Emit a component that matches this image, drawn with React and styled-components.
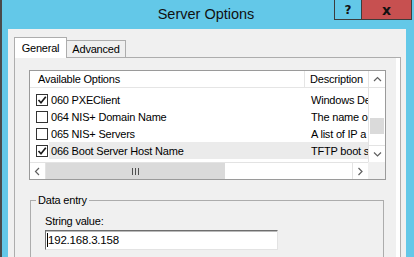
import React from "react";
import styled, { createGlobalStyle } from "styled-components";

const GlobalStyle = createGlobalStyle`
  html, body {
    margin: 0;
    padding: 0;
    overflow: hidden;
  }
  body {
    width: 414px;
    height: 257px;
  }
`;

const Window = styled.div`
  box-sizing: border-box;
  width: 414px;
  height: 257px;
  display: flex;
  flex-direction: column;
  overflow: hidden;
  background-color: #63c8e8;
  border-left: 2px solid #4a4a4a;
  font-family: "Liberation Sans", Arial, sans-serif;
  font-size: 11px;
  letter-spacing: -0.2px;
  color: #000;
`;

const TitleBar = styled.div`
  height: 29px;
  flex-shrink: 0;
  display: grid;
  grid-template-columns: 1fr auto 1fr;
`;

const Title = styled.div`
  grid-column: 2;
  align-self: center;
  font-size: 14.5px;
  letter-spacing: 0;
  color: #111;
  padding: 0 4px 1px 0;
`;

const CaptionButtons = styled.div`
  grid-column: 3;
  justify-self: end;
  align-self: start;
  display: flex;
  margin-right: 2px;
`;

const CaptionButton = styled.div`
  box-sizing: border-box;
  width: ${(p) => p.$width}px;
  height: 20px;
  display: flex;
  justify-content: center;
  align-items: center;
  background-color: ${(p) => (p.$close ? "#c75050" : "transparent")};
  border: 1px solid #3c3c3c;
  border-top: none;
  border-right: ${(p) => (p.$close ? "1px solid #3c3c3c" : "none")};
  font-family: "DejaVu Sans", sans-serif;
  font-weight: 700;
  font-size: ${(p) => (p.$close ? 14 : 12)}px;
  line-height: 1;
  color: #111;
`;

const Client = styled.div`
  flex: 1;
  display: flex;
  flex-direction: column;
  margin: 0 8px 0 6px;
  padding: 8px 5px 0 6px;
  background-color: #f0f0f0;
  min-height: 0;
`;

const TabStrip = styled.div`
  display: flex;
  align-items: flex-end;
  height: 21px;
  position: relative;
  z-index: 1;
`;

const Tab = styled.div`
  box-sizing: border-box;
  width: ${(p) => p.$width}px;
  height: ${(p) => (p.$active ? 21 : 17)}px;
  margin-bottom: ${(p) => (p.$active ? 0 : 1)}px;
  display: flex;
  justify-content: center;
  align-items: center;
  padding-bottom: ${(p) => (p.$active ? 1 : 0)}px;
  background-color: ${(p) => (p.$active ? "#ffffff" : "#f0f0f0")};
  border: 1px solid #adadad;
  border-bottom: none;
  border-left: ${(p) => (p.$active ? "1px solid #adadad" : "none")};
`;

const Panel = styled.div`
  flex: 1;
  margin-top: -1px;
  display: flex;
  flex-direction: column;
  padding: 12px 14px 0 14px;
  background-color: #f0f0f0;
  border: 1px solid #adadad;
  border-bottom: none;
  box-shadow: inset -4px 0 0 #ffffff;
`;

const ListView = styled.div`
  height: 108px;
  flex-shrink: 0;
  display: grid;
  grid-template-columns: 1fr 17px;
  grid-template-rows: 1fr 17px;
  background-color: #ffffff;
  border: 1px solid #9a9a9a;
`;

const ListContent = styled.div`
  overflow: hidden;
  min-width: 0;
`;

const Header = styled.div`
  display: flex;
  height: 16px;
  border-bottom: 1px solid #e5e5e5;
`;

const HeaderCell = styled.div`
  box-sizing: border-box;
  width: ${(p) => (p.$width ? `${p.$width}px` : "auto")};
  flex: ${(p) => (p.$width ? "none" : 1)};
  padding-left: ${(p) => p.$pad}px;
  display: flex;
  align-items: center;
  white-space: nowrap;
  overflow: hidden;
  border-right: ${(p) => (p.$width ? "1px solid #e5e5e5" : "none")};
`;

const Rows = styled.div`
  padding-top: 3px;
`;

const Row = styled.div`
  display: flex;
  height: 17px;
  align-items: center;
`;

const CheckCell = styled.div`
  box-sizing: border-box;
  width: 19px;
  height: 100%;
  padding-left: 6px;
  display: flex;
  align-items: center;
`;

const CheckBox = styled.div`
  box-sizing: border-box;
  width: 12px;
  height: 12px;
  border: 1px solid #333333;
  background-color: #ffffff;
  display: flex;
  justify-content: center;
  align-items: center;
`;

const RowBody = styled.div`
  flex: 1;
  min-width: 0;
  height: 100%;
  display: flex;
  align-items: center;
  background-color: ${(p) => (p.$selected ? "#ebebeb" : "transparent")};
  white-space: nowrap;
  overflow: hidden;
`;

const NameCell = styled.div`
  box-sizing: border-box;
  width: 256px;
  flex-shrink: 0;
  padding-left: 2px;
`;

const DescCell = styled.div`
  flex: 1;
  min-width: 0;
  padding-left: 6px;
  overflow: hidden;
`;

const VScroll = styled.div`
  display: flex;
  flex-direction: column;
  background-color: #ffffff;
  border-left: 1px solid #e3e3e3;
`;

const HScroll = styled.div`
  display: flex;
  background-color: #ffffff;
  border-top: 1px solid #e3e3e3;
`;

const ArrowButton = styled.div`
  box-sizing: border-box;
  width: ${(p) => (p.$horizontal ? "16px" : "100%")};
  height: ${(p) => (p.$horizontal ? "100%" : "17px")};
  flex-shrink: 0;
  display: flex;
  justify-content: center;
  align-items: center;
  background-color: #ffffff;
  border: 1px solid #e3e3e3;
  border-width: ${(p) => p.$borders};
`;

const Track = styled.div`
  flex: 1;
  display: flex;
  flex-direction: ${(p) => (p.$horizontal ? "row" : "column")};
  padding: ${(p) => (p.$horizontal ? "0" : "30px 1px 0 1px")};
`;

const Thumb = styled.div`
  box-sizing: border-box;
  width: ${(p) => (p.$horizontal ? "179px" : "100%")};
  height: ${(p) => (p.$horizontal ? "100%" : "16px")};
  display: flex;
  justify-content: center;
  align-items: center;
  background-color: #dadada;
`;

const Corner = styled.div`
  background-color: #f0f0f0;
`;

const GroupBox = styled.fieldset`
  margin: 13px 2px 0 1px;
  padding: 7px 14px 20px 14px;
  border: 1px solid #acacac;
  min-width: 0;
`;

const Legend = styled.legend`
  margin-left: -9px;
  padding: 0 2px;
  line-height: 14px;
`;

const FieldLabel = styled.div`
  line-height: 14px;
  margin-bottom: 2px;
`;

const TextBox = styled.div`
  box-sizing: border-box;
  width: 233px;
  height: 20px;
  display: flex;
  align-items: center;
  padding-left: 1px;
  background-color: #ffffff;
  border: 1px solid;
  border-color: #6e6e6e #e3e3e3 #e3e3e3 #6e6e6e;
  box-shadow: inset 0 1px 0 #b9b9b9;
  font-size: 11.5px;
`;

const Caret = styled.span`
  width: 1px;
  height: 14px;
  background-color: #000;
`;

const Chevron = ({ dir }) => {
  const pts = {
    up: "1,5 4.5,1.5 8,5",
    down: "1,1.5 4.5,5 8,1.5",
    left: "5,1 1.5,4.5 5,8",
    right: "1.5,1 5,4.5 1.5,8",
  }[dir];
  const vertical = dir === "up" || dir === "down";
  return (
    <svg width={vertical ? 9 : 7} height={vertical ? 7 : 9} viewBox={vertical ? "0 0 9 7" : "0 0 7 9"}>
      <polyline points={pts} fill="none" stroke="#606060" strokeWidth="1.2" />
    </svg>
  );
};

const Grip = () => (
  <svg width="7" height="7" viewBox="0 0 7 7">
    <path d="M0.5 0v7M3.5 0v7M6.5 0v7" stroke="#505050" strokeWidth="1" />
  </svg>
);

const Check = () => (
  <svg width="10" height="10" viewBox="0 0 10 10">
    <polyline points="1.5,5 4,7.8 8.8,1.8" fill="none" stroke="#1a1a1a" strokeWidth="1.7" />
  </svg>
);

const options = [
  { name: "060 PXEClient", desc: "Windows De", checked: true },
  { name: "064 NIS+ Domain Name", desc: "The name o", checked: false },
  { name: "065 NIS+ Servers", desc: "A list of IP a", checked: false },
  { name: "066 Boot Server Host Name", desc: "TFTP boot s", checked: true, selected: true },
];

const App = () => {
  return (
    <>
      <GlobalStyle />
      <Window>
        <TitleBar>
          <Title>Server Options</Title>
          <CaptionButtons>
            <CaptionButton $width={27}>?</CaptionButton>
            <CaptionButton $width={51} $close>
              x
            </CaptionButton>
          </CaptionButtons>
        </TitleBar>
        <Client>
          <TabStrip>
            <Tab $width={53} $active>
              General
            </Tab>
            <Tab $width={59}>Advanced</Tab>
          </TabStrip>
          <Panel>
            <ListView>
              <ListContent>
                <Header>
                  <HeaderCell $width={275} $pad={8}>
                    Available Options
                  </HeaderCell>
                  <HeaderCell $pad={5}>Description</HeaderCell>
                </Header>
                <Rows>
                  {options.map((o) => (
                    <Row key={o.name}>
                      <CheckCell>
                        <CheckBox>{o.checked && <Check />}</CheckBox>
                      </CheckCell>
                      <RowBody $selected={o.selected}>
                        <NameCell>{o.name}</NameCell>
                        <DescCell>{o.desc}</DescCell>
                      </RowBody>
                    </Row>
                  ))}
                </Rows>
              </ListContent>
              <VScroll>
                <ArrowButton $borders="0 0 1px 0">
                  <Chevron dir="up" />
                </ArrowButton>
                <Track>
                  <Thumb />
                </Track>
                <ArrowButton $borders="1px 0 0 0">
                  <Chevron dir="down" />
                </ArrowButton>
              </VScroll>
              <HScroll>
                <ArrowButton $horizontal $borders="0 1px 0 0">
                  <Chevron dir="left" />
                </ArrowButton>
                <Track $horizontal>
                  <Thumb $horizontal>
                    <Grip />
                  </Thumb>
                </Track>
                <ArrowButton $horizontal $borders="0 0 0 1px">
                  <Chevron dir="right" />
                </ArrowButton>
              </HScroll>
              <Corner />
            </ListView>
            <GroupBox>
              <Legend>Data entry</Legend>
              <FieldLabel>String value:</FieldLabel>
              <TextBox>
                <Caret />
                192.168.3.158
              </TextBox>
            </GroupBox>
          </Panel>
        </Client>
      </Window>
    </>
  );
};

export default App;
